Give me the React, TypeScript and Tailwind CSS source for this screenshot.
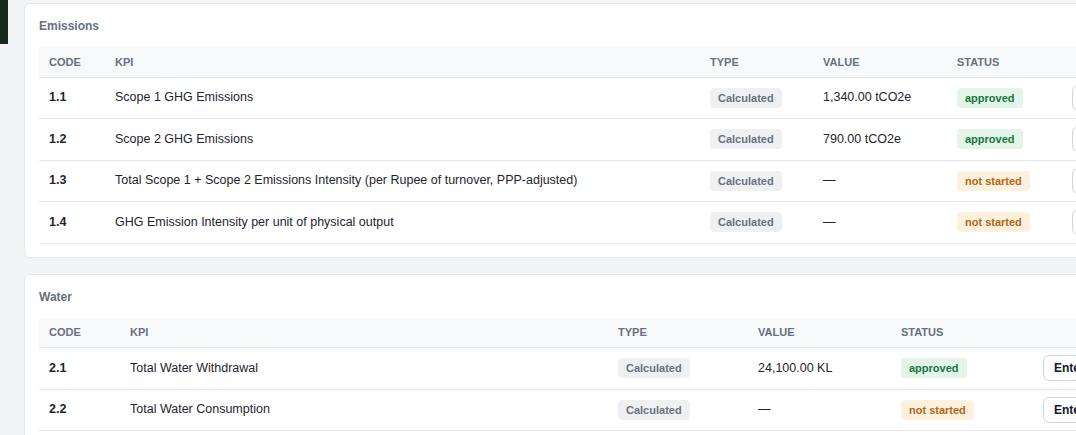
type Row = {
  code: string;
  kpi: string;
  type: string;
  value: string | null;
  status: 'approved' | 'not started';
};

type Section = {
  title: string;
  widths: string[];
  rows: Row[];
};

const sections: Section[] = [
  {
    title: 'Emissions',
    widths: ['w-[66px]', 'w-[595px]', 'w-[113px]', 'w-[134px]', 'w-[115px]'],
    rows: [
      { code: '1.1', kpi: 'Scope 1 GHG Emissions', type: 'Calculated', value: '1,340.00 tCO2e', status: 'approved' },
      { code: '1.2', kpi: 'Scope 2 GHG Emissions', type: 'Calculated', value: '790.00 tCO2e', status: 'approved' },
      {
        code: '1.3',
        kpi: 'Total Scope 1 + Scope 2 Emissions Intensity (per Rupee of turnover, PPP-adjusted)',
        type: 'Calculated',
        value: null,
        status: 'not started',
      },
      { code: '1.4', kpi: 'GHG Emission Intensity per unit of physical output', type: 'Calculated', value: null, status: 'not started' },
    ],
  },
  {
    title: 'Water',
    widths: ['w-[81px]', 'w-[488px]', 'w-[140px]', 'w-[143px]', 'w-[142px]'],
    rows: [
      { code: '2.1', kpi: 'Total Water Withdrawal', type: 'Calculated', value: '24,100.00 KL', status: 'approved' },
      { code: '2.2', kpi: 'Total Water Consumption', type: 'Calculated', value: null, status: 'not started' },
    ],
  },
];

function StatusBadge({ status }: { status: Row['status'] }) {
  if (status === 'approved') {
    return (
      <span className="inline-block rounded px-2 py-0.5 text-[11px] font-bold leading-4 bg-[#e3f4e9] text-[#17753f]">
        approved
      </span>
    );
  }
  return (
    <span className="inline-block rounded px-2 py-0.5 text-[11px] font-bold leading-4 bg-[#fdf0dc] text-[#b0671a]">
      not started
    </span>
  );
}

function KpiTable({ section }: { section: Section }) {
  const heads = ['Code', 'KPI', 'Type', 'Value', 'Status'];
  return (
    <div className="rounded-md border border-gray-200 bg-white px-3.5 pt-3.5 pb-[13px]">
      <h3 className="mb-[13px] text-xs font-bold leading-4 text-[#676f7e]">{section.title}</h3>
      <table className="w-full table-fixed">
        <thead>
          <tr className="h-[30px] bg-[#f8f9fb] border-b border-gray-200">
            {heads.map((h, i) => (
              <th
                key={h}
                className={`${section.widths[i]} px-2.5 text-left text-[11px] font-bold uppercase text-[#697080]`}
              >
                {h}
              </th>
            ))}
            <th className="px-2.5" />
          </tr>
        </thead>
        <tbody>
          {section.rows.map((row) => (
            <tr key={row.code} className="h-[41.5px] border-b border-gray-200 text-[12.5px] text-[#1f2430]">
              <td className="px-2.5 font-bold">{row.code}</td>
              <td className="px-2.5 whitespace-nowrap">{row.kpi}</td>
              <td className="px-2.5">
                <span className="inline-block rounded px-2 py-0.5 text-[11px] font-bold leading-4 bg-[#eef0f3] text-[#6a7180]">
                  {row.type}
                </span>
              </td>
              <td className="px-2.5">{row.value ?? '—'}</td>
              <td className="px-2.5">
                <StatusBadge status={row.status} />
              </td>
              <td className="px-2.5">
                <button className="rounded-md border border-gray-300 bg-white px-2.5 py-1 text-xs font-bold leading-4 text-[#111827] whitespace-nowrap">
                  Enter value
                </button>
              </td>
            </tr>
          ))}
        </tbody>
      </table>
    </div>
  );
}

export default function App() {
  return (
    <div
      className="flex h-[435px] w-[1076px] overflow-hidden bg-[#f3f4f6]"
      style={{ fontFamily: '"Liberation Sans", Arial, sans-serif' }}
    >
      {/* sidebar edge */}
      <div className="w-2 shrink-0">
        <div className="h-[44px] w-2 bg-[#16291d]" />
      </div>

      <div className="shrink-0 pl-4 pt-[3px]">
        <div className="flex w-[1172px] flex-col gap-4">
          {sections.map((s) => (
            <KpiTable key={s.title} section={s} />
          ))}
        </div>
      </div>
    </div>
  );
}
